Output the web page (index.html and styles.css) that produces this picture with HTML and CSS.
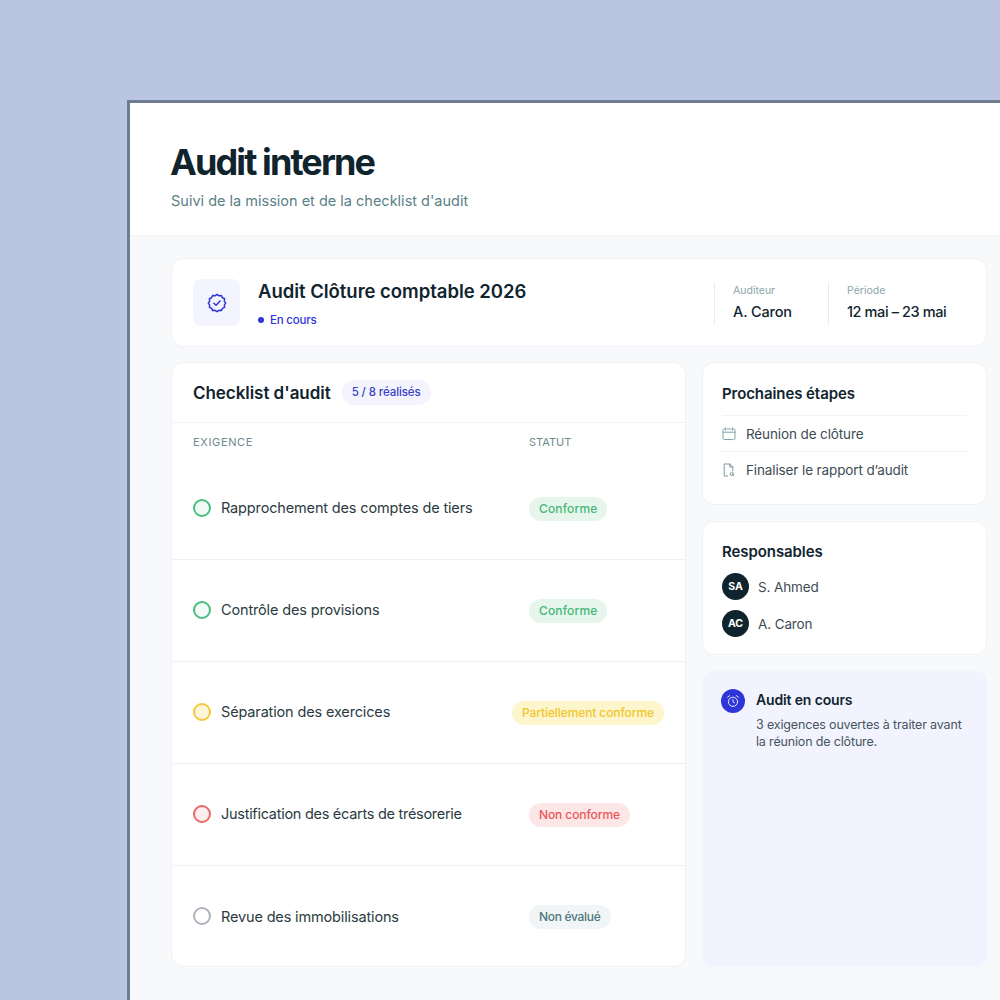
FILE: index.html
```html
<!DOCTYPE html>
<html lang="fr">
<head>
<meta charset="utf-8">
<title>Audit interne</title>
<link rel="stylesheet" href="styles.css">
</head>
<body>
<div class="frame">
  <header class="head">
    <h1>Audit interne</h1>
    <p>Suivi de la mission et de la checklist d'audit</p>
  </header>
  <main class="content">
    <section class="card hero">
      <div class="hero-icon">
        <svg width="20" height="20" viewBox="0 0 20 20" fill="none" stroke="#2f35d8" stroke-width="1.5" stroke-linejoin="round" stroke-linecap="round"><path d="M10 1.4l2 1.4 2.4-.3 1 2.2 2.2 1-.3 2.4 1.4 2-1.4 2 .3 2.3-2.2 1-1 2.2-2.4-.3-2 1.4-2-1.4-2.4.3-1-2.2-2.2-1 .3-2.3-1.4-2 1.4-2-.3-2.4 2.2-1 1-2.2 2.4.3z"/><path d="M6.9 10.2l2.2 2.1 4-4.2"/></svg>
      </div>
      <div class="hero-main">
        <h2>Audit Clôture comptable 2026</h2>
        <div class="state"><span class="dot"></span>En cours</div>
      </div>
      <div class="meta m1"><span>Auditeur</span><strong>A. Caron</strong></div>
      <div class="meta m2"><span>Période</span><strong>12 mai – 23 mai</strong></div>
    </section>
    <div class="columns">
      <section class="card checklist">
        <div class="check-head">
          <h3>Checklist d'audit</h3>
          <span class="count">5 / 8 réalisés</span>
        </div>
        <div class="row-head"><span>EXIGENCE</span><span>STATUT</span></div>
        <div class="row"><span class="ring green"></span><span class="label">Rapprochement des comptes de tiers</span><span class="cell"><span class="pill p-green">Conforme</span></span></div>
        <div class="row"><span class="ring green"></span><span class="label">Contrôle des provisions</span><span class="cell"><span class="pill p-green">Conforme</span></span></div>
        <div class="row"><span class="ring yellow"></span><span class="label">Séparation des exercices</span><span class="cell"><span class="pill p-yellow">Partiellement conforme</span></span></div>
        <div class="row"><span class="ring red"></span><span class="label label-tight">Justification des écarts de trésorerie</span><span class="cell"><span class="pill p-red">Non conforme</span></span></div>
        <div class="row"><span class="ring grey"></span><span class="label">Revue des immobilisations</span><span class="cell"><span class="pill p-grey">Non évalué</span></span></div>
      </section>
      <aside class="side">
        <section class="card steps">
          <h3>Prochaines étapes</h3>
          <div class="step">
            <svg width="14" height="14" viewBox="0 0 14 14" fill="none" stroke="#7fa3a6" stroke-width="1" stroke-linecap="round" stroke-linejoin="round"><path d="M3 2H2.2C1.5 2 1 2.5 1 3.2v8.1c0 .7.5 1.2 1.2 1.2h7.3M11 2h.8c.7 0 1.2.5 1.2 1.2v8.1c0 .4-.2.8-.5 1M5 2h4M1 5.2h12M3.6.8v2.4M10.4.8v2.4M10.5 12.6l1 .4 1-1"/></svg>
            <span>Réunion de clôture</span>
          </div>
          <div class="step">
            <svg width="14" height="14" viewBox="0 0 14 14" fill="none" stroke="#7f979c" stroke-width="1" stroke-linecap="round" stroke-linejoin="round"><path d="M5.5 13H2.2V1h5.6l3 3v4M7.8 1v3h3"/><circle cx="9.6" cy="11" r="1.5"/><path d="M10.8 12.2l1 .9"/></svg>
            <span>Finaliser le rapport d’audit</span>
          </div>
        </section>
        <section class="card people">
          <h3>Responsables</h3>
          <div class="person"><span class="avatar">SA</span><span>S. Ahmed</span></div>
          <div class="person"><span class="avatar">AC</span><span>A. Caron</span></div>
        </section>
        <section class="banner">
          <span class="banner-icon">
            <svg width="14" height="14" viewBox="0 0 14 14" fill="none" stroke="#e6e8ff" stroke-width="1" stroke-linecap="round" stroke-linejoin="round"><circle cx="7" cy="7.8" r="4.6"/><path d="M7 5.6v2.3l1.4.9M1.6 3.2l2-1.6M12.4 3.2l-2-1.6"/></svg>
          </span>
          <div class="banner-text">
            <h4>Audit en cours</h4>
            <p>3 exigences ouvertes à traiter avant la réunion de clôture.</p>
          </div>
        </section>
      </aside>
    </div>
  </main>
</div>
</body>
</html>
```
FILE: styles.css
```css
* { box-sizing: border-box; }
html, body { margin: 0; height: 1000px; overflow: hidden; }
body {
  background: #b9c5e1;
  font-family: Inter, "Noto Sans", sans-serif;
  color: #10242e;
  padding: 100px 0 0 127px;
}
h1, h2, h3, h4, p { margin: 0; }
.frame {
  width: 873px;
  height: 900px;
  border-top: 3px solid #6f7d94;
  border-left: 3px solid #6f7d94;
  background: #f7f9fb;
}
.head {
  height: 133px;
  background: #fff;
  padding: 39px 0 0 40px;
  border-bottom: 1px solid #f1f3f6;
}
.head h1 {
  font-size: 36px;
  line-height: 40px;
  font-weight: 700;
  letter-spacing: -1.9px;
  color: #10242e;
}
.head p {
  margin-top: 8px;
  padding-left: 1px;
  font-size: 14.5px;
  line-height: 22px;
  color: #5a8087;
  letter-spacing: 0;
}
.content { padding: 22px 13px 0 41px; }
.card {
  background: #fff;
  border: 1px solid #eff1f4;
  border-radius: 12px;
}
.hero {
  height: 89px;
  display: flex;
  align-items: center;
  padding: 0 0 0 21px;
}
.hero-icon {
  width: 47px;
  height: 47px;
  border-radius: 8px;
  background: #f3f4fe;
  display: flex;
  align-items: center;
  justify-content: center;
  flex: none;
}
.hero-main { margin-left: 18px; flex: 1; }
.hero-main h2 {
  font-size: 18.5px;
  line-height: 24px;
  font-weight: 600;
  letter-spacing: -.03px;
  margin-top: 1px;
}
.state {
  margin-top: 9px;
  display: flex;
  align-items: center;
  font-size: 11.5px;
  line-height: 16px;
  font-weight: 500;
  color: #2f35d8;
  letter-spacing: -.2px;
}
.dot {
  width: 6px;
  height: 6px;
  border-radius: 50%;
  background: #2f35d8;
  margin-right: 6px;
}
.meta {
  height: 42px;
  border-left: 1px solid #e9ecef;
  padding-left: 18px;
  display: flex;
  flex-direction: column;
  flex: none;
}
.m1 { width: 114px; }
.m2 { width: 158px; }
.meta span {
  font-size: 10.5px;
  line-height: 14px;
  margin-top: 2px;
  color: #8aa6aa;
}
.meta strong {
  margin-top: 4px;
  font-size: 14.5px;
  line-height: 20px;
  font-weight: 500;
  letter-spacing: -.4px;
}
.m1 strong { letter-spacing: -.15px; }
.columns {
  display: flex;
  gap: 16px;
  margin-top: 15px;
  height: 605px;
}
.checklist { width: 515px; flex: none; }
.check-head {
  height: 60px;
  display: flex;
  align-items: center;
  padding: 1px 21px 0;
  gap: 11px;
  border-bottom: 1px solid #f1f3f6;
}
.check-head h3 {
  font-size: 17px;
  line-height: 24px;
  font-weight: 600;
  letter-spacing: -.05px;
}
.count {
  height: 25px;
  line-height: 25px;
  padding: 0 10px;
  border-radius: 13px;
  background: #f3f4fe;
  color: #3a3fc4;
  font-size: 11.5px;
  font-weight: 500;
  letter-spacing: -.1px;
  position: relative;
  top: -1px;
}
.row-head {
  height: 35px;
  padding: 3px 21px 0;
  display: flex;
  align-items: center;
  font-size: 11px;
  color: #6f8a8e;
  letter-spacing: .65px;
}
.row-head span:first-child { width: 336px; }
.row-head span:last-child { letter-spacing: 0; }
.row {
  height: 102px;
  display: flex;
  align-items: center;
  padding: 0 21px;
  border-bottom: 1px solid #eff1f4;
  position: relative;
}
.row:last-child { border-bottom: 0; }
.ring {
  width: 18px;
  height: 18px;
  border-radius: 50%;
  border: 2px solid;
  flex: none;
  margin-top: -2px;
}
.green { border-color: #4bbd7f; background: #f1faf5; }
.yellow { border-color: #f4c93c; background: #fdf6d8; }
.red { border-color: #e8696a; background: #fdeeee; }
.grey { border-color: #adb3ba; background: #fff; }
.label {
  margin-left: 10px;
  width: 308px;
  font-size: 14.5px;
  line-height: 20px;
  color: #2b3a42;
  letter-spacing: -.15px;
  flex: none;
  margin-top: -1px;
}
.label-tight { letter-spacing: -.28px; }
.cell { flex: 1; display: flex; }
.pill {
  height: 24px;
  line-height: 24px;
  padding: 0 10px;
  border-radius: 12px;
  font-size: 12px;
  font-weight: 500;
  letter-spacing: -.1px;
  white-space: nowrap;
}
.p-green { background: #e6f6ec; color: #45b878; letter-spacing: .15px; }
.p-yellow { background: #fdf5cc; color: #f0c52b; margin-left: -17px; }
.p-red { background: #fde6e6; color: #e8585a; }
.p-grey { background: #f2f5f6; color: #4f7680; letter-spacing: -.3px; }
.side { flex: 1; display: flex; flex-direction: column; gap: 16px; }
.steps { height: 143px; padding: 20px 19px 0; }
.side h3 {
  font-size: 15px;
  line-height: 22px;
  font-weight: 600;
  letter-spacing: -.08px;
}
.step {
  height: 36px;
  display: flex;
  align-items: center;
  gap: 10px;
  border-top: 1px solid #f1f3f6;
  font-size: 13.5px;
  color: #3d4c54;
  letter-spacing: -.12px;
}
.steps h3 { margin-bottom: 10px; }
.people { height: 134px; padding: 19px 19px 0; }
.people h3 { margin-bottom: 10px; }
.person {
  height: 27px;
  display: flex;
  align-items: center;
  gap: 9px;
  font-size: 13.5px;
  color: #3d4c54;
  letter-spacing: -.12px;
  margin-bottom: 10px;
}
.avatar {
  width: 27px;
  height: 27px;
  border-radius: 50%;
  background: #10242e;
  color: #fff;
  font-size: 10.5px;
  font-weight: 700;
  letter-spacing: 0;
  text-align: center;
  line-height: 27px;
  flex: none;
}
.banner {
  flex: 1;
  background: #f2f3fe;
  border-radius: 12px;
  padding: 18px 19px;
  display: flex;
  gap: 11px;
}
.banner-icon {
  width: 24px;
  height: 24px;
  border-radius: 50%;
  background: #2f35d8;
  display: flex;
  align-items: center;
  justify-content: center;
  flex: none;
}
.banner-text h4 {
  font-size: 14px;
  line-height: 22px;
  font-weight: 600;
  letter-spacing: -.15px;
}
.banner-text p {
  margin-top: 5px;
  font-size: 12.5px;
  line-height: 17px;
  color: #46565e;
  letter-spacing: -.16px;
}
```
